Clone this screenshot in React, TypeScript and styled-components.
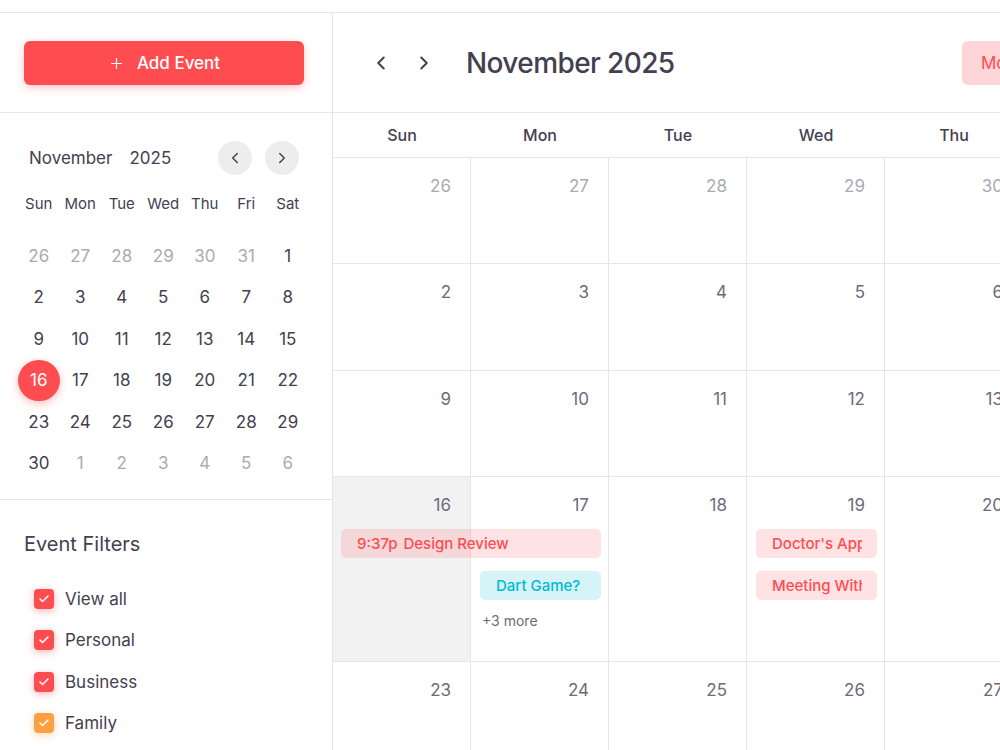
import React from "react";
import styled, { createGlobalStyle } from "styled-components";
import { ChevronLeft, ChevronRight, Plus, Check } from "lucide-react";

const GlobalStyle = createGlobalStyle`
  * { box-sizing: border-box; }
  html, body { margin: 0; padding: 0; background: #ffffff; overflow: hidden; }
  body {
    font-family: Inter, "Noto Sans", "Liberation Sans", sans-serif;
    color: #444050;
    -webkit-font-smoothing: antialiased;
  }
`;

const PRIMARY = "#ff4c51";
const LINE = "#e6e6e8";
const HEADING = "#444050";
const BODY = "#6d6b77";
const MUTED = "#acaab1";

const Shell = styled.div`
  margin-top: 12px;
  border-top: 1px solid ${LINE};
  display: flex;
  align-items: stretch;
  width: 1299px;
  min-height: calc(100vh - 12px);
`;

/* ---------- sidebar ---------- */

const Sidebar = styled.aside`
  width: 333px;
  flex: none;
  border-right: 1px solid ${LINE};
  display: flex;
  flex-direction: column;
`;

const ActionSection = styled.div`
  flex: none;
  height: 100px;
  padding: 28px 28px 0 24px;
  border-bottom: 1px solid ${LINE};
`;

const AddButton = styled.button`
  width: 280px;
  height: 44px;
  border: none;
  border-radius: 6px;
  background: ${PRIMARY};
  color: #ffffff;
  font-family: inherit;
  font-size: 17px;
  font-weight: 500;
  display: flex;
  align-items: center;
  justify-content: center;
  gap: 12px;
  box-shadow: 0 3px 8px rgba(255, 76, 81, 0.3);
  cursor: pointer;
`;

const MiniCalendar = styled.div`
  flex: none;
  height: 387px;
  padding: 28px 33px 0 18px;
  border-bottom: 1px solid ${LINE};
`;

const MiniHeader = styled.div`
  display: flex;
  align-items: center;
  height: 34px;
  padding-left: 11px;
`;

const MiniTitle = styled.div`
  flex: 1;
  display: flex;
  gap: 17px;
  font-size: 17px;
  color: ${HEADING};
`;

const MiniNav = styled.div`
  display: flex;
  gap: 13px;
`;

const CircleButton = styled.button`
  width: 34px;
  height: 34px;
  border-radius: 50%;
  border: none;
  background: #ededee;
  color: ${HEADING};
  display: flex;
  align-items: center;
  justify-content: center;
  padding: 0;
  cursor: pointer;
`;

const MiniGrid = styled.div<{ $rowHeight: number }>`
  display: grid;
  grid-template-columns: repeat(7, 41.5px);
  grid-auto-rows: ${(p) => p.$rowHeight}px;
  align-items: center;
  justify-items: center;
`;

const MiniWeekdays = styled(MiniGrid)`
  margin-top: 13px;
  font-size: 15px;
  color: ${HEADING};
`;

const MiniDays = styled(MiniGrid)`
  margin-top: 17px;
`;

const MiniDay = styled.div<{ $muted?: boolean; $selected?: boolean }>`
  width: 41.5px;
  height: 41.5px;
  border-radius: 50%;
  display: flex;
  align-items: center;
  justify-content: center;
  font-size: 17px;
  color: ${(p) => (p.$selected ? "#ffffff" : p.$muted ? MUTED : HEADING)};
  background: ${(p) => (p.$selected ? PRIMARY : "transparent")};
  box-shadow: ${(p) => (p.$selected ? "0 3px 8px rgba(255, 76, 81, 0.35)" : "none")};
`;

const Filters = styled.div`
  padding: 32px 0 0 24px;
`;

const FiltersTitle = styled.h5`
  margin: 0;
  font-size: 20px;
  line-height: 24px;
  font-weight: 400;
  color: ${HEADING};
`;

const FilterList = styled.div`
  margin-top: 22px;
  padding-left: 10px;
  display: flex;
  flex-direction: column;
`;

const FilterRow = styled.label`
  height: 41.5px;
  display: flex;
  align-items: center;
  gap: 11px;
  font-size: 17px;
  color: ${HEADING};
`;

const CheckBox = styled.span<{ $color: string }>`
  width: 20px;
  height: 20px;
  border-radius: 4px;
  background: ${(p) => p.$color};
  display: flex;
  align-items: center;
  justify-content: center;
  color: #ffffff;
  box-shadow: 0 2px 8px ${(p) => p.$color}66;
`;

/* ---------- main calendar ---------- */

const Main = styled.main`
  width: 966px;
  flex: none;
  display: flex;
  flex-direction: column;
`;

const Toolbar = styled.div`
  flex: none;
  height: 100px;
  border-bottom: 1px solid ${LINE};
  display: flex;
  align-items: center;
  padding: 0 24px 0 33px;
`;

const NavButton = styled.button`
  width: 30px;
  height: 30px;
  border: none;
  background: transparent;
  color: ${HEADING};
  display: flex;
  align-items: center;
  justify-content: center;
  padding: 0;
  cursor: pointer;
`;

const NavGroup = styled.div`
  display: flex;
  gap: 13px;
`;

const Title = styled.h2`
  margin: 0 0 0 27px;
  font-size: 28px;
  font-weight: 500;
  color: ${HEADING};
  letter-spacing: -0.6px;
`;

const ViewSwitch = styled.div`
  margin-left: auto;
  display: flex;
`;

const ViewButton = styled.button<{ $active?: boolean; $w: number }>`
  width: ${(p) => p.$w}px;
  height: 44px;
  border: none;
  background: ${(p) => (p.$active ? "#ffd6d7" : "#ffe2e3")};
  color: ${PRIMARY};
  font-family: inherit;
  font-size: 17px;
  padding: 0 0 0 19px;
  text-align: left;
  cursor: pointer;
  &:first-child { border-radius: 6px 0 0 6px; }
  &:last-child { border-radius: 0 6px 6px 0; }
`;

const WeekdayHeader = styled.div`
  flex: none;
  height: 45px;
  border-bottom: 1px solid ${LINE};
  display: grid;
  grid-template-columns: repeat(7, 138px);
  align-items: center;
  justify-items: center;
  font-size: 16px;
  font-weight: 500;
  color: ${HEADING};
`;

const WeekRow = styled.div<{ $h: number }>`
  flex: none;
  height: ${(p) => p.$h}px;
  border-bottom: 1px solid ${LINE};
  display: grid;
  grid-template-columns: repeat(7, 138px);
  grid-template-rows: 52px auto auto auto 1fr;
`;

const DayCell = styled.div<{ $col: number; $today?: boolean }>`
  grid-column: ${(p) => p.$col};
  grid-row: 1 / -1;
  border-right: 1px solid ${LINE};
  background: ${(p) => (p.$today ? "#f2f2f3" : "transparent")};
`;

const DayNumber = styled.div<{ $muted?: boolean }>`
  padding: 18px 19px 0 0;
  text-align: right;
  font-size: 17px;
  line-height: 20px;
  color: ${(p) => (p.$muted ? MUTED : BODY)};
`;

const EventChip = styled.div<{ $from: number; $span: number; $row: number; $tone: "red" | "cyan" }>`
  grid-column: ${(p) => p.$from} / span ${(p) => p.$span};
  grid-row: ${(p) => p.$row};
  margin: ${(p) => (p.$row > 2 ? "13px" : "0")} 8px 0 ${(p) => (p.$from === 1 ? 8 : 9)}px;
  height: 29px;
  border-radius: 5px;
  padding: 0 15px 0 16px;
  display: flex;
  align-items: center;
  gap: 6px;
  font-size: 15px;
  font-weight: 500;
  white-space: nowrap;
  background: ${(p) => (p.$tone === "red" ? "rgba(255, 76, 81, 0.16)" : "rgba(0, 186, 209, 0.16)")};
  color: ${(p) => (p.$tone === "red" ? PRIMARY : "#00bad1")};
`;

const EventText = styled.span`
  min-width: 0;
  overflow: hidden;
`;

const MoreLink = styled.div<{ $col: number; $row: number }>`
  grid-column: ${(p) => p.$col};
  grid-row: ${(p) => p.$row};
  margin: 12px 0 0 11px;
  font-size: 14px;
  line-height: 17px;
  color: ${BODY};
`;

/* ---------- data ---------- */

const weekdays = ["Sun", "Mon", "Tue", "Wed", "Thu", "Fri", "Sat"];

type Day = { n: number; muted?: boolean };

const buildWeeks = (): Day[][] => {
  const days: Day[] = [];
  for (let d = 26; d <= 31; d++) days.push({ n: d, muted: true });
  for (let d = 1; d <= 30; d++) days.push({ n: d });
  for (let d = 1; days.length < 42; d++) days.push({ n: d, muted: true });
  const weeks: Day[][] = [];
  for (let i = 0; i < 42; i += 7) weeks.push(days.slice(i, i + 7));
  return weeks;
};

const weeks = buildWeeks();
const rowHeights = [106, 107, 106, 185, 106, 106];

type CalEvent = { from: number; span: number; row: number; tone: "red" | "cyan"; time?: string; title: string };

const weekEvents: Record<number, { events: CalEvent[]; more?: { col: number; row: number; label: string } }> = {
  3: {
    events: [
      { from: 1, span: 2, row: 2, tone: "red", time: "9:37p", title: "Design Review" },
      { from: 2, span: 1, row: 3, tone: "cyan", title: "Dart Game?" },
      { from: 4, span: 1, row: 2, tone: "red", title: "Doctor's Appointment" },
      { from: 4, span: 1, row: 3, tone: "red", title: "Meeting With Client" },
    ],
    more: { col: 2, row: 4, label: "+3 more" },
  },
};

const filters = [
  { label: "View all", color: PRIMARY },
  { label: "Personal", color: PRIMARY },
  { label: "Business", color: PRIMARY },
  { label: "Family", color: "#ff9f43" },
];

export default function App() {
  return (
    <>
      <GlobalStyle />
      <Shell>
        <Sidebar>
          <ActionSection>
            <AddButton>
              <Plus size={17} strokeWidth={1.6} />
              Add Event
            </AddButton>
          </ActionSection>

          <MiniCalendar>
            <MiniHeader>
              <MiniTitle>
                <span>November</span>
                <span>2025</span>
              </MiniTitle>
              <MiniNav>
                <CircleButton aria-label="Previous month">
                  <ChevronLeft size={18} strokeWidth={2} />
                </CircleButton>
                <CircleButton aria-label="Next month">
                  <ChevronRight size={18} strokeWidth={2} />
                </CircleButton>
              </MiniNav>
            </MiniHeader>
            <MiniWeekdays $rowHeight={30}>
              {weekdays.map((w) => (
                <span key={w}>{w}</span>
              ))}
            </MiniWeekdays>
            <MiniDays $rowHeight={41.5}>
              {weeks.flat().map((d, i) => (
                <MiniDay key={i} $muted={d.muted} $selected={!d.muted && d.n === 16}>
                  {d.n}
                </MiniDay>
              ))}
            </MiniDays>
          </MiniCalendar>

          <Filters>
            <FiltersTitle>Event Filters</FiltersTitle>
            <FilterList>
              {filters.map((f) => (
                <FilterRow key={f.label}>
                  <CheckBox $color={f.color}>
                    <Check size={12} strokeWidth={3} />
                  </CheckBox>
                  {f.label}
                </FilterRow>
              ))}
            </FilterList>
          </Filters>
        </Sidebar>

        <Main>
          <Toolbar>
            <NavGroup>
              <NavButton aria-label="Previous">
                <ChevronLeft size={22} strokeWidth={2.2} />
              </NavButton>
              <NavButton aria-label="Next">
                <ChevronRight size={22} strokeWidth={2.2} />
              </NavButton>
            </NavGroup>
            <Title>November 2025</Title>
            <ViewSwitch>
              <ViewButton $active $w={92}>Month</ViewButton>
              <ViewButton $w={80}>Week</ViewButton>
              <ViewButton $w={70}>Day</ViewButton>
              <ViewButton $w={71}>List</ViewButton>
            </ViewSwitch>
          </Toolbar>

          <WeekdayHeader>
            {weekdays.map((w) => (
              <span key={w}>{w}</span>
            ))}
          </WeekdayHeader>

          {weeks.map((week, wi) => {
            const extra = weekEvents[wi];
            return (
              <WeekRow key={wi} $h={rowHeights[wi]}>
                {week.map((d, di) => (
                  <DayCell key={di} $col={di + 1} $today={!d.muted && d.n === 16}>
                    <DayNumber $muted={d.muted}>{d.n}</DayNumber>
                  </DayCell>
                ))}
                {extra?.events.map((e, ei) => (
                  <EventChip key={ei} $from={e.from} $span={e.span} $row={e.row} $tone={e.tone}>
                    {e.time && <span>{e.time}</span>}
                    <EventText>{e.title}</EventText>
                  </EventChip>
                ))}
                {extra?.more && (
                  <MoreLink $col={extra.more.col} $row={extra.more.row}>
                    {extra.more.label}
                  </MoreLink>
                )}
              </WeekRow>
            );
          })}
        </Main>
      </Shell>
    </>
  );
}
